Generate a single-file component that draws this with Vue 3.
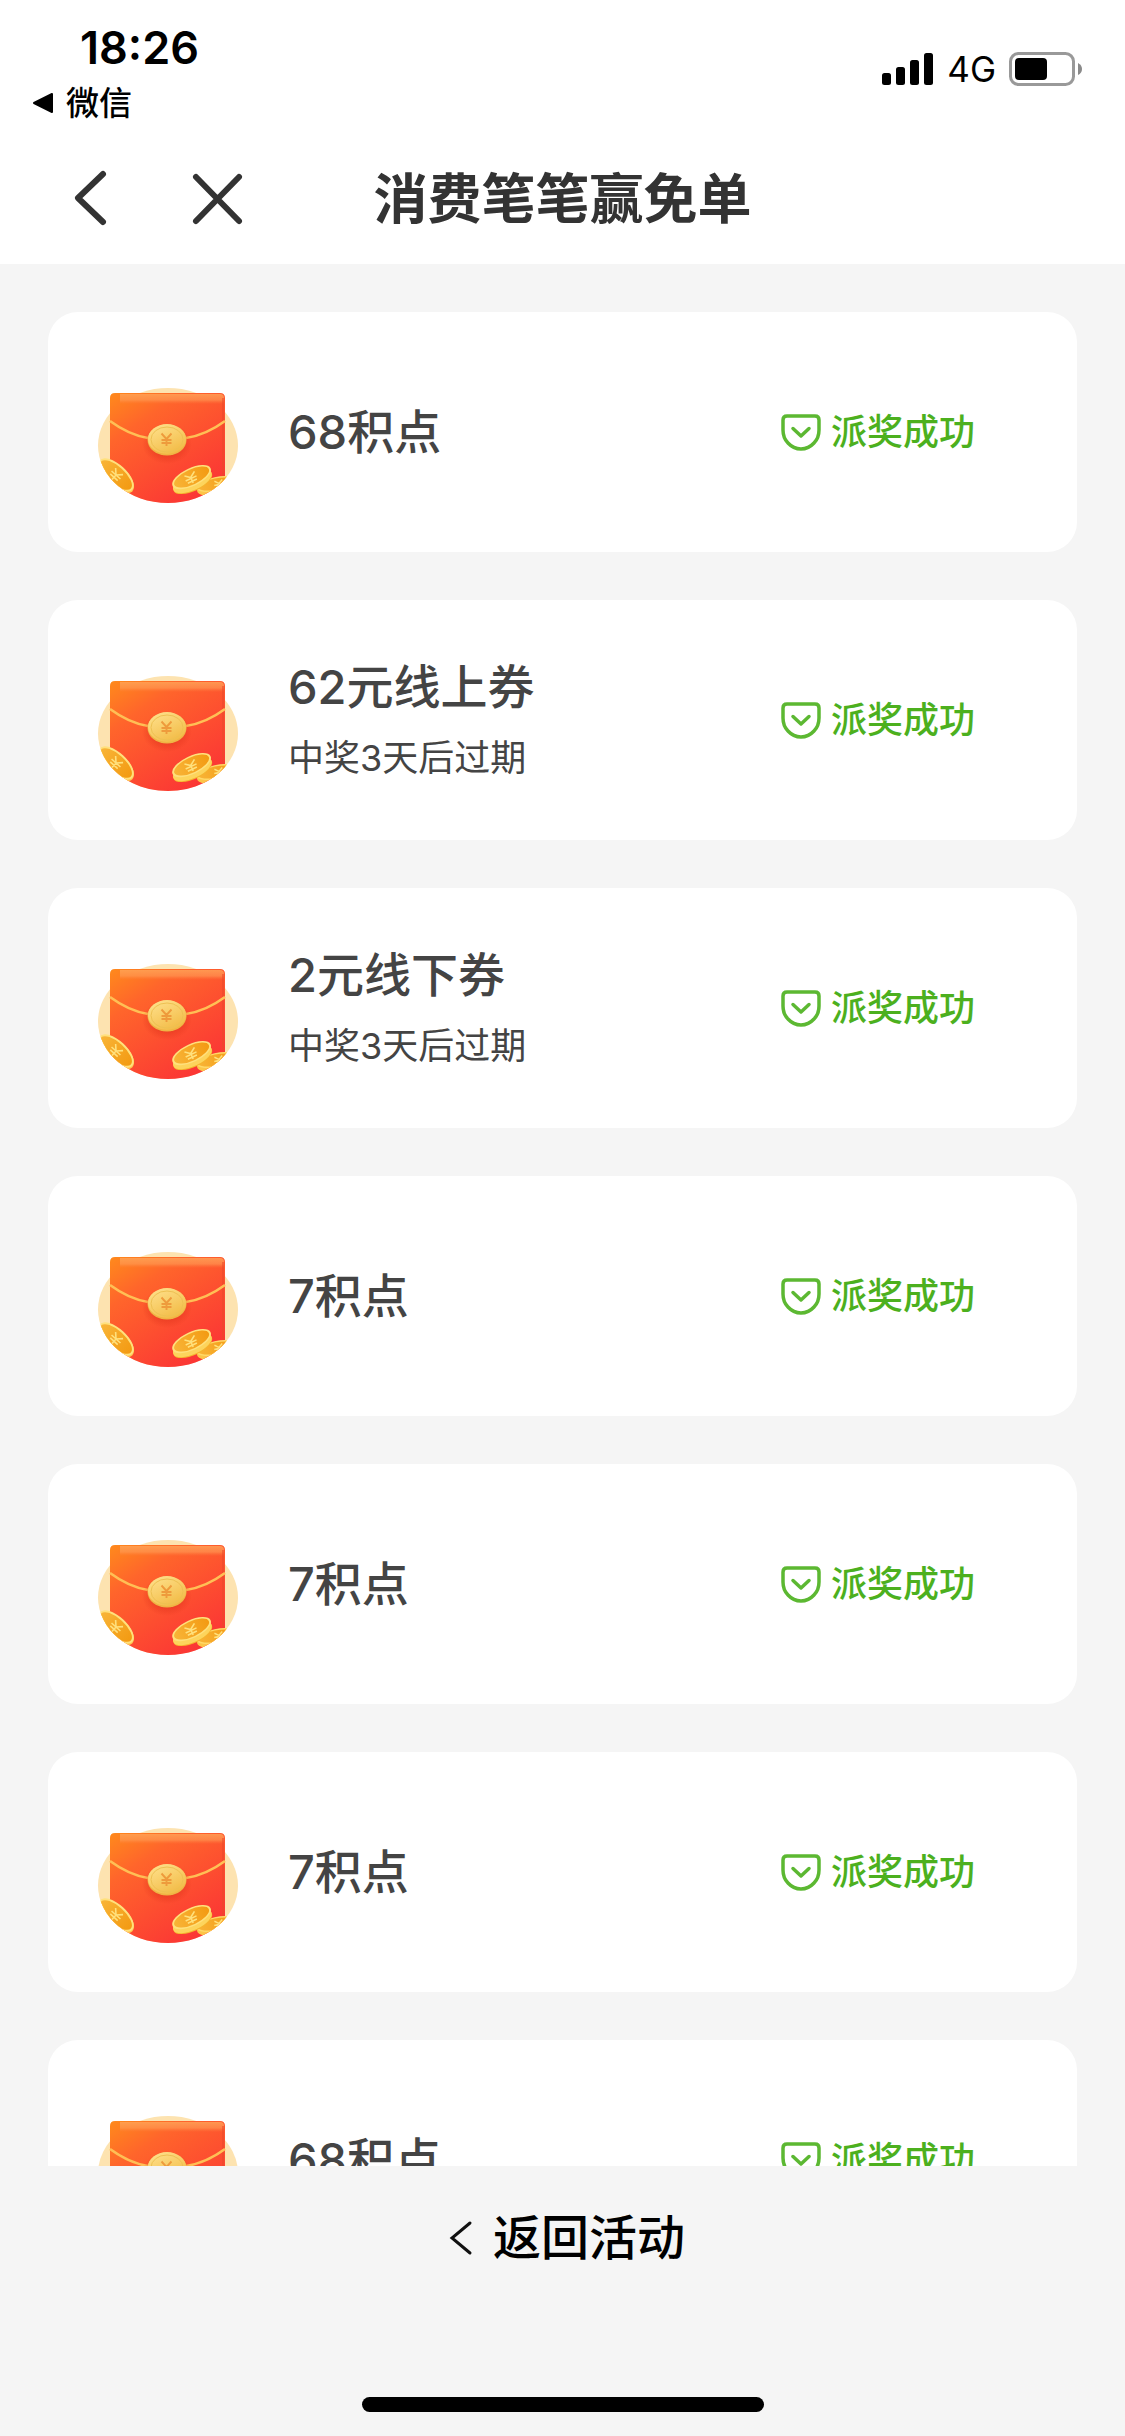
<template>
  <div class="page">
    <!-- shared drawings -->
    <svg class="sprite" aria-hidden="true">
      <defs>
        <linearGradient id="envelope-fill" x1="0" y1="0" x2="0.7" y2="1">
          <stop offset="0" stop-color="#ff8a1c" />
          <stop offset="0.3" stop-color="#ff652b" />
          <stop offset="1" stop-color="#fb3535" />
        </linearGradient>
        <linearGradient id="envelope-top" x1="0" y1="0" x2="0" y2="1">
          <stop offset="0" stop-color="#ffa55a" />
          <stop offset="0.6" stop-color="#ff9a55" stop-opacity="0.8" />
          <stop offset="1" stop-color="#ff8040" stop-opacity="0" />
        </linearGradient>
        <linearGradient id="seal-fill" x1="0" y1="0" x2="0.6" y2="1">
          <stop offset="0" stop-color="#ffe391" />
          <stop offset="1" stop-color="#f3bd49" />
        </linearGradient>
        <linearGradient id="coin-face" x1="0" y1="0" x2="1" y2="0">
          <stop offset="0" stop-color="#f8b437" />
          <stop offset="1" stop-color="#f39a12" />
        </linearGradient>
        <radialGradient id="seal-shade">
          <stop offset="0.5" stop-color="#d92c17" stop-opacity="0.5" />
          <stop offset="1" stop-color="#d92c17" stop-opacity="0" />
        </radialGradient>
        <clipPath id="envelope-clip">
          <path d="M0 0H144V85H142C142 117 111 143 72 143S2 117 2 85H0Z" />
        </clipPath>
      </defs>
      <symbol id="red-envelope" viewBox="0 0 144 144">
        <ellipse cx="72" cy="85.500" rx="70" ry="57.500" fill="#fde3b0" />
        <g clip-path="url(#envelope-clip)">
          <path d="M19 33H124Q129 33 129 38V144H14V38Q14 33 19 33Z" fill="url(#envelope-fill)" />
          <path d="M24 34H124Q128 34 128 38V44H24Z" fill="url(#envelope-top)" opacity="0.8" />
          <path d="M127 38V116" stroke="#e94a2b" stroke-width="2" opacity="0.55" />
          <path d="M14 61Q33 75 52 78M90 78Q110 75 129 61" fill="none" stroke="#ffbf55" stroke-width="2.600" />
          <ellipse cx="71" cy="84" rx="25" ry="20" fill="url(#seal-shade)" />
          <ellipse cx="71" cy="80" rx="19.500" ry="15.500" fill="#efb445" />
          <ellipse cx="71" cy="79" rx="19" ry="15" fill="url(#seal-fill)" />
          <ellipse cx="71" cy="79.500" rx="16" ry="12.500" fill="none" stroke="#edc053" stroke-width="1" />
          <path d="M65.500 73.500L70.500 79L75.500 73.500M70.500 79V86M65.500 80H75.500M65.500 83H75.500" fill="none" stroke="#ee9b3c" stroke-width="1.900" />

          <g transform="translate(20 115) rotate(42)">
            <ellipse cx="1" cy="1" rx="22" ry="11" fill="#ffc950" />
            <ellipse rx="22" ry="10.500" fill="#ffe07c" />
            <ellipse cy="0" rx="20" ry="8.500" fill="url(#coin-face)" />
            <path d="M-5 -5L0 0L5 -5M0 0V6M-6 0H6M-5 3H5" fill="none" stroke="#ffe07c" stroke-width="1.600" />
          </g>
          <g transform="translate(120 124) rotate(-12)">
            <ellipse cy="3" rx="20" ry="8" fill="#fcc548" />
            <ellipse rx="20" ry="7" fill="#ffd868" />
            <ellipse cy="0" rx="18" ry="5.500" fill="url(#coin-face)" />
            <path d="M-1 -3L3 0L7 -3M3 0V4M-2 1H8" fill="none" stroke="#ffe07c" stroke-width="1.500" />
          </g>
          <g transform="translate(96 118) rotate(-25)">
            <ellipse cx="-1" cy="4" rx="21" ry="9" fill="#f5b52e" />
            <ellipse cx="-1" cy="3" rx="21" ry="9" fill="#fdd45c" />
            <ellipse cy="-1" rx="21" ry="9" fill="#ffe07c" />
            <ellipse cy="-1" rx="19" ry="7.500" fill="url(#coin-face)" />
            <path d="M-6 -5L-1 -1L5 -5M-1 -1V5M-7 0H5M-6 3H4" fill="none" stroke="#ffe07c" stroke-width="1.600" />
          </g>
        </g>
      </symbol>
      <symbol id="pocket-check" viewBox="0 0 40 40">
        <path d="M6 4H34Q38 4 38 8V18Q38 26 33 31Q27.500 37 20 37T7 31Q2 26 2 18V8Q2 4 6 4Z" fill="none" stroke="#5cb832" stroke-width="3.500" />
        <path d="M12 16.500L20 24L28 16.500" fill="none" stroke="#5cb832" stroke-width="3.500" stroke-linecap="round" stroke-linejoin="round" />
      </symbol>
    </svg>

    <header class="top">
      <div class="status-bar">
        <div class="status-left">
          <time class="clock">18:26</time>
          <button class="app-back" type="button">
            <svg width="22" height="22" viewBox="0 0 22 22" aria-hidden="true">
              <path d="M2 11L20 2V20Z" fill="#000" stroke="#000" stroke-width="2" stroke-linejoin="round" />
            </svg>
            微信
          </button>
        </div>
        <div class="status-right">
          <svg width="52" height="32" viewBox="0 0 52 32" aria-hidden="true">
            <rect x="0" y="20" width="9" height="12" rx="2.500" />
            <rect x="14" y="14" width="9" height="18" rx="2.500" />
            <rect x="28" y="7" width="9" height="25" rx="2.500" />
            <rect x="42" y="0" width="9" height="32" rx="2.500" />
          </svg>
          <span class="network">4G</span>
          <svg width="74" height="34" viewBox="0 0 74 34" aria-hidden="true">
            <rect x="1.500" y="1.500" width="63" height="31" rx="8" fill="none" stroke="#999" stroke-width="3" />
            <rect x="6" y="6" width="32" height="22" rx="4" />
            <path d="M69 11Q73 13 73 17T69 23Z" fill="#8a8a8a" />
          </svg>
        </div>
      </div>

      <nav class="nav-bar">
        <div class="nav-actions">
          <button class="nav-btn" type="button" aria-label="返回">
            <svg width="60" height="60" viewBox="0 0 60 60" aria-hidden="true">
              <path d="M43 6L18 30L43 54" />
            </svg>
          </button>
          <button class="nav-btn" type="button" aria-label="关闭">
            <svg width="60" height="60" viewBox="0 0 60 60" aria-hidden="true">
              <path d="M8 9L51 53M51 9L8 53" />
            </svg>
          </button>
        </div>
        <h1 class="nav-title">消费笔笔赢免单</h1>
      </nav>
    </header>

    <main class="prize-scroll">
      <ul class="prize-list">
        <li v-for="prize in prizes" :key="prize.id" class="prize-card">
          <svg class="prize-icon" aria-hidden="true"><use href="#red-envelope" /></svg>
          <div class="prize-info">
            <h2 class="prize-name">{{ prize.name }}</h2>
            <p v-if="prize.note" class="prize-note">{{ prize.note }}</p>
          </div>
          <div class="prize-status">
            <svg class="status-icon" aria-hidden="true"><use href="#pocket-check" /></svg>
            <span>派奖成功</span>
          </div>
        </li>
      </ul>
    </main>

    <footer class="bottom">
      <button class="return-btn" type="button">
        <svg width="24" height="36" viewBox="0 0 24 36" aria-hidden="true">
          <path d="M21 3L3 18L21 33" fill="none" stroke="#111" stroke-width="3" stroke-linecap="round" />
        </svg>
        返回活动
      </button>
      <div class="home-bar"></div>
    </footer>
  </div>
</template>

<script setup>
const prizes = [
  { id: 1, name: '68积点' },
  { id: 2, name: '62元线上券', note: '中奖3天后过期' },
  { id: 3, name: '2元线下券', note: '中奖3天后过期' },
  { id: 4, name: '7积点' },
  { id: 5, name: '7积点' },
  { id: 6, name: '7积点' },
  { id: 7, name: '68积点' }
]
</script>

<style>
body {
  margin: 0;
  background: #f5f5f5;
}
</style>

<style scoped>
.page {
  display: flex;
  flex-direction: column;
  height: 100vh;
  overflow: hidden;
  background: #f5f5f5;
  color: #444;
  font-family: Inter, "Noto Sans CJK SC", sans-serif;
}

.sprite {
  position: absolute;
  width: 0;
  height: 0;
}

button {
  padding: 0;
  border: none;
  background: none;
  color: inherit;
  font: inherit;
  cursor: pointer;
}

.top {
  flex: none;
  background: #fff;
}

/* status bar */
.status-bar {
  display: flex;
  justify-content: space-between;
  height: 132px;
  padding: 0 42px 0 32px;
  box-sizing: border-box;
  color: #000;
}

.status-left {
  display: flex;
  flex-direction: column;
  padding-top: 20px;
}

.clock {
  padding-left: 48px;
  font-size: 45px;
  font-weight: 600;
  line-height: 56px;
}

.app-back {
  display: flex;
  align-items: center;
  gap: 12px;
  font-size: 33px;
  font-weight: 500;
  line-height: 54px;
}

.status-right {
  display: flex;
  align-items: center;
  gap: 13px;
  height: 138px;
}

.network {
  font-size: 35px;
  line-height: 36px;
}

/* nav bar */
.nav-bar {
  display: grid;
  grid-template-columns: 1fr auto 1fr;
  align-items: center;
  height: 132px;
  color: #333;
}

.nav-actions {
  display: flex;
  gap: 68px;
  padding-left: 60px;
}

.nav-btn {
  display: flex;
  width: 60px;
  height: 60px;
}

.nav-btn path {
  fill: none;
  stroke: #333;
  stroke-width: 6;
  stroke-linecap: round;
  stroke-linejoin: round;
}

.nav-title {
  margin: 0;
  padding-top: 4px;
  font-size: 54px;
  font-weight: 700;
  line-height: 72px;
}

/* prize list */
.prize-scroll {
  flex: 1;
  min-height: 0;
  overflow: hidden;
}

.prize-list {
  display: flex;
  flex-direction: column;
  gap: 48px;
  margin: 0;
  padding: 48px;
  list-style: none;
}

.prize-card {
  display: flex;
  align-items: center;
  height: 240px;
  padding: 0 102px 0 48px;
  box-sizing: border-box;
  border-radius: 30px;
  background: #fff;
}

.prize-icon {
  width: 144px;
  height: 144px;
  margin-right: 48px;
}

.prize-info {
  flex: 1;
}

.prize-name {
  margin: 0;
  font-size: 47px;
  font-weight: 500;
  line-height: 72px;
}

.prize-note {
  margin: 0;
  padding-top: 4px;
  font-size: 36px;
  line-height: 62px;
}

.prize-status {
  display: flex;
  align-items: center;
  gap: 10px;
  color: #4cb01e;
  font-size: 36px;
  font-weight: 500;
  line-height: 54px;
}

.status-icon {
  width: 40px;
  height: 40px;
}

/* bottom */
.bottom {
  display: flex;
  flex: none;
  flex-direction: column;
  align-items: center;
  justify-content: space-between;
  height: 270px;
  padding: 36px 0 24px;
  box-sizing: border-box;
}

.return-btn {
  display: flex;
  align-items: center;
  gap: 20px;
  padding-left: 9px;
  color: #000;
  font-size: 48px;
  font-weight: 500;
  line-height: 72px;
}

.home-bar {
  width: 402px;
  height: 15px;
  border-radius: 8px;
  background: #000;
}
</style>
